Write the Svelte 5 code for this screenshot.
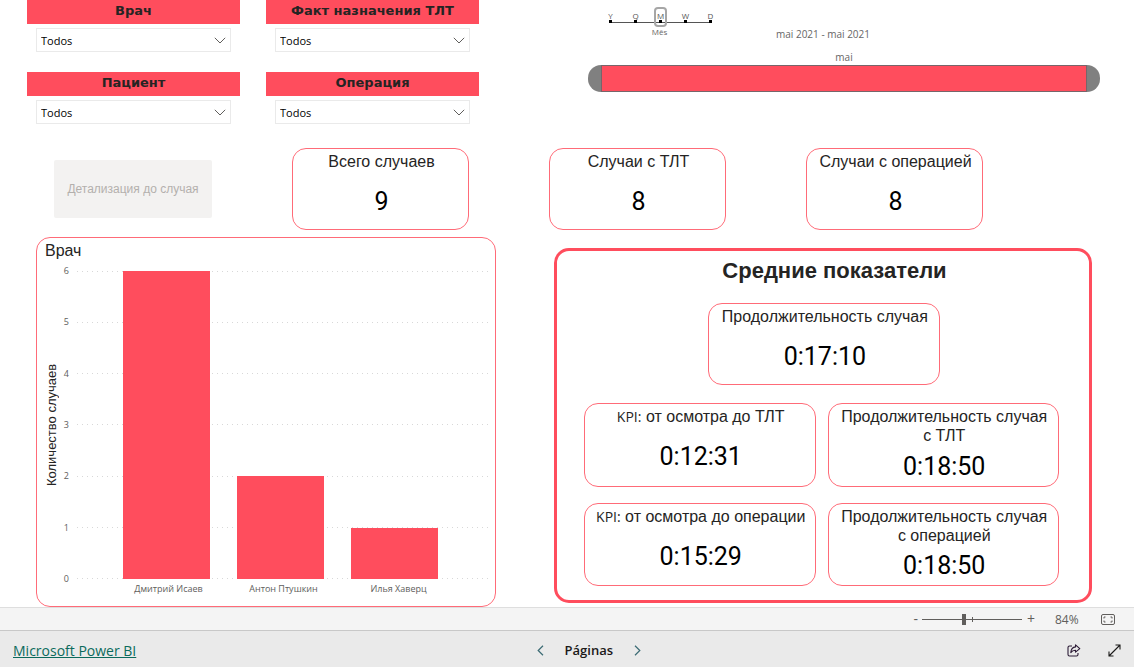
<script>
  const filters = ['Врач', 'Факт назначения ТЛТ', 'Пациент', 'Операция']
  const periods = ['Y', 'Q', 'M', 'W', 'D']

  const totals = [
    { title: 'Всего случаев', value: '9' },
    { title: 'Случаи с ТЛТ', value: '8' },
    { title: 'Случаи с операцией', value: '8' },
  ]

  const averages = [
    { prefix: 'KPI:', title: 'от осмотра до ТЛТ', value: '0:12:31' },
    { title: 'Продолжительность случая с ТЛТ', value: '0:18:50' },
    { prefix: 'KPI:', title: 'от осмотра до операции', value: '0:15:29' },
    { title: 'Продолжительность случая с операцией', value: '0:18:50' },
  ]

  const doctors = [
    { name: 'Дмитрий Исаев', cases: 6 },
    { name: 'Антон Птушкин', cases: 2 },
    { name: 'Илья Хаверц', cases: 1 },
  ]
  const MAX = 6
  const ticks = [6, 5, 4, 3, 2, 1, 0]

  let period = $state('M')
  let zoom = $state(84)
</script>

{#snippet card(item)}
  <article class="card">
    <h3>{#if item.prefix}<small>{item.prefix}</small>{' '}{/if}{item.title}</h3>
    <p>{item.value}</p>
  </article>
{/snippet}

<div class="report">
  <main>
    <section class="top">
      <div class="filters">
        {#each filters as name, i}
          <div class="filter">
            <label for="filter-{i}">{name}</label>
            <div class="select">
              <select id="filter-{i}"><option>Todos</option></select>
              <svg viewBox="0 0 12 7" width="12" height="7" fill="none" stroke="#605e5c">
                <path d="M0.8 0.8 L6 6 L11.2 0.8"/>
              </svg>
            </div>
          </div>
        {/each}
      </div>

      <div class="timeline">
        <div class="periods">
          {#each periods as p}
            <button class:active={period === p} onclick={() => (period = p)}><span>{p}</span></button>
          {/each}
        </div>
        <div class="period-name">Mês</div>
        <div class="dates">mai 2021 - mai 2021</div>
        <div class="month">mai</div>
        <div class="range">
          <button class="handle start" aria-label="Início"></button>
          <div class="span"></div>
          <button class="handle end" aria-label="Fim"></button>
        </div>
      </div>
    </section>

    <section class="totals">
      <button class="drill" disabled>Детализация до случая</button>
      {#each totals as t}{@render card(t)}{/each}
    </section>

    <section class="bottom">
      <div class="chart">
        <h2>Врач</h2>
        <div class="chart-body">
          <div class="y-title">Количество случаев</div>
          <div class="y-axis">
            {#each ticks as t}<span>{t}</span>{/each}
          </div>
          <div class="plot">
            <div class="grid">
              {#each ticks as t (t)}<i></i>{/each}
            </div>
            <div class="bars">
              {#each doctors as d}
                <div class="bar" style="height: {(d.cases / MAX) * 100}%"></div>
              {/each}
            </div>
          </div>
          <div class="x-axis">
            {#each doctors as d}<span>{d.name}</span>{/each}
          </div>
        </div>
      </div>

      <div class="panel">
        <h2>Средние показатели</h2>
        <div class="lead">
          {@render card({ title: 'Продолжительность случая', value: '0:17:10' })}
        </div>
        <div class="kpis">
          {#each averages as a}{@render card(a)}{/each}
        </div>
      </div>
    </section>
  </main>

  <div class="zoombar">
    <button aria-label="Reduzir">-</button>
    <input type="range" min="42" max="142" bind:value={zoom} aria-label="Zoom"/>
    <button aria-label="Ampliar">+</button>
    <output>{zoom}%</output>
    <button class="fit" aria-label="Ajustar à página">
      <svg viewBox="0 0 14 11" width="14" height="11" fill="none" stroke="#605e5c">
        <rect x="0.5" y="0.5" width="13" height="10" rx="1.5"/>
        <path d="M3 4.5V3h1.5 M9.5 3H11v1.5 M3 6.5V8h1.5 M9.5 8H11V6.5"/>
      </svg>
    </button>
  </div>

  <footer>
    <div class="brand"><a href="https://powerbi.microsoft.com">Microsoft Power BI</a></div>
    <nav>
      <button aria-label="Página anterior">
        <svg viewBox="0 0 7 11" width="7" height="11" fill="none" stroke="#3b6b74" stroke-width="1.2">
          <path d="M6 0.8 L1.2 5.5 L6 10.2"/>
        </svg>
      </button>
      <span>Páginas</span>
      <button aria-label="Próxima página">
        <svg viewBox="0 0 7 11" width="7" height="11" fill="none" stroke="#3b6b74" stroke-width="1.2">
          <path d="M1 0.8 L5.8 5.5 L1 10.2"/>
        </svg>
      </button>
    </nav>
    <div class="actions">
      <button aria-label="Compartilhar">
        <svg viewBox="0 0 14 13" width="14" height="13" fill="none" stroke="#2b1a35" stroke-width="1.1">
          <path d="M5 2H2.5Q1 2 1 3.5V10.5Q1 12 2.5 12H9.5Q11 12 11 10.5V9"/>
          <path d="M8.5 0.8 L12.8 4.6 L8.5 8.2 V6.2 Q5.5 6.1 3.8 8.6 Q4.2 3.3 8.5 2.9Z" stroke-linejoin="round"/>
        </svg>
      </button>
      <button aria-label="Tela cheia">
        <svg viewBox="0 0 13 13" width="13" height="13" fill="none" stroke="#1b1a19" stroke-width="1.1">
          <path d="M1 12 L12 1 M7.5 1H12V5.5 M1 7.5V12H5.5"/>
        </svg>
      </button>
    </div>
  </footer>
</div>

<style>
  :global(body) { margin: 0; }

  .report {
    --red: #ff4d5d;
    --ui: "Open Sans", "Noto Sans", sans-serif;
    min-height: 100vh;
    display: flex;
    flex-direction: column;
    background: #fff;
    color: #252423;
    font-family: "Liberation Sans", Arial, sans-serif;
  }

  .report * { box-sizing: border-box; }

  main {
    flex: 1;
    display: flex;
    flex-direction: column;
  }

  button {
    border: 0;
    padding: 0;
    background: none;
    font-family: var(--ui);
    color: inherit;
  }

  h2, h3, p { margin: 0; }
  svg { display: block; }

  .top {
    display: grid;
    grid-template-columns: 452fr 512fr;
    gap: 109px;
    padding: 0 34px 0 27px;
  }

  .filters {
    display: grid;
    grid-template-columns: 1fr 1fr;
    gap: 20px 26px;
    align-content: start;
  }

  .filter label {
    display: block;
    height: 24px;
    background: var(--red);
    font: bold 13px/22px "DejaVu Sans", sans-serif;
    text-align: center;
  }

  .select {
    display: grid;
    align-items: center;
    margin: 4px 9px 0;
  }

  .select > * { grid-area: 1 / 1; }

  .select select {
    appearance: none;
    height: 24px;
    padding: 0 4px;
    border: 1px solid #eaeaea;
    border-radius: 0;
    background: #fff;
    color: #000;
    font: 11px var(--ui);
  }

  .select svg {
    justify-self: end;
    margin-right: 5px;
    pointer-events: none;
  }

  .timeline {
    font-family: var(--ui);
    color: #666;
    text-align: center;
  }

  .periods {
    position: relative;
    display: flex;
    width: 125px;
    margin: 7px 0 0 10px;
  }

  .periods::before {
    content: "";
    position: absolute;
    left: 12px;
    right: 12px;
    top: 15px;
    height: 1px;
    background: #555;
  }

  .periods button {
    width: 25px;
    height: 20px;
    font-size: 8px;
    line-height: 14px;
    color: #555;
  }

  .periods span {
    position: relative;
    display: block;
    width: 13px;
    height: 20px;
    margin: 0 auto;
    padding-top: 2px;
  }

  .periods span::after {
    content: "";
    position: absolute;
    left: 5px;
    top: 13px;
    width: 3px;
    height: 3px;
    background: #000;
  }

  .periods .active span {
    border-radius: 4px;
    box-shadow: inset 0 0 0 2px #a6a6a6;
  }

  .period-name {
    width: 125px;
    margin-left: 9px;
    font-size: 8px;
    line-height: 10px;
  }

  .dates {
    margin-top: -10px;
    padding-right: 42px;
    font-size: 10px;
    line-height: 14px;
  }

  .month {
    margin-top: 9px;
    padding-bottom: 1px;
    font-size: 10px;
    line-height: 14px;
  }

  .range {
    display: flex;
    height: 27px;
  }

  .handle {
    width: 13px;
    background: #808080;
  }

  .start { border-radius: 13px 0 0 13px; }
  .end { border-radius: 0 13px 13px 0; }

  .span {
    flex: 1;
    background: var(--red);
    border: 1px solid #77656a;
  }

  .totals {
    display: grid;
    grid-template-columns: 158fr 177fr 177fr 177fr;
    gap: 80px;
    margin-top: 24px;
    padding: 0 151px 0 54px;
    align-items: start;
  }

  .drill {
    height: 58px;
    margin-top: 12px;
    border-radius: 2px;
    background: #f3f2f1;
    color: #b3b0ad;
    font: 12px "Liberation Sans", Arial, sans-serif;
  }

  .card {
    min-height: 82px;
    display: flex;
    flex-direction: column;
    padding: 3px 8px 0 10px;
    border: 1px solid #ff6b78;
    border-radius: 14px;
    text-align: center;
  }

  .card h3 {
    font-size: 16px;
    font-weight: 400;
    line-height: 19px;
  }

  .card small {
    font: 14px var(--ui);
    line-height: 16px;
  }

  .card p {
    flex: 1;
    display: flex;
    align-items: center;
    justify-content: center;
    padding-top: 3px;
    color: #000;
    font: 25px/28px Roboto, sans-serif;
  }

  .bottom {
    flex: 1;
    display: grid;
    grid-template-columns: 460fr 538fr;
    gap: 58px;
    margin-top: 7px;
    padding: 0 42px 0 36px;
  }

  .chart {
    display: flex;
    flex-direction: column;
    border: 1px solid #ff6b78;
    border-radius: 14px;
    padding: 3px 5px 10px 8px;
  }

  .chart h2 {
    font-size: 16px;
    font-weight: 400;
    line-height: 20px;
  }

  .chart-body {
    flex: 1;
    display: grid;
    grid-template: 1fr 17px / 14px 10px 1fr;
    padding-top: 10px;
  }

  .y-title {
    writing-mode: vertical-rl;
    transform: rotate(180deg);
    text-align: center;
    font-size: 13px;
    line-height: 14px;
  }

  .y-axis {
    display: flex;
    flex-direction: column;
    justify-content: space-between;
    margin: -6px 0;
    color: #605e5c;
    font: 9px/12px var(--ui);
    text-align: right;
  }

  .plot {
    display: grid;
    margin-left: 8px;
  }

  .plot > * { grid-area: 1 / 1; }

  .grid {
    display: flex;
    flex-direction: column;
    justify-content: space-between;
  }

  .grid i {
    height: 1px;
    background: repeating-linear-gradient(90deg, #d8d8d8 0 1px, transparent 1px 5px);
  }

  .bars, .x-axis {
    display: grid;
    grid-template-columns: repeat(3, 1fr);
    padding: 0 38px 0 32px;
  }

  .bars { align-items: end; }

  .bar {
    width: 76%;
    margin: 0 auto;
    background: var(--red);
  }

  .x-axis {
    grid-column: 3;
    margin-left: 8px;
    padding: 0 34px;
    color: #605e5c;
    font: 9px/20px var(--ui);
    text-align: center;
    white-space: nowrap;
  }

  .panel {
    display: flex;
    flex-direction: column;
    margin: 11px 0 4px;
    padding: 6px 30px 14px 27px;
    border: 3px solid var(--red);
    border-radius: 15px;
  }

  .panel h2 {
    padding-left: 26px;
    font-size: 22px;
    line-height: 28px;
    text-align: center;
  }

  .lead { padding: 18px 25% 18px 26%; }

  .kpis {
    flex: 1;
    display: grid;
    grid-template-columns: 1fr 1fr;
    gap: 16px 12px;
  }

  .zoombar {
    display: flex;
    align-items: center;
    justify-content: flex-end;
    height: 23px;
    padding-right: 19px;
    border-top: 1px solid #dedede;
    background: #f4f4f4;
    color: #605e5c;
    font: 12px var(--ui);
  }

  .zoombar button {
    font-size: 14px;
    line-height: 16px;
  }

  .zoombar output {
    width: 24px;
    margin: 0 22px 0 20px;
  }

  .zoombar input {
    appearance: none;
    width: 100px;
    height: 12px;
    margin: 0 5px 0 4px;
    background:
      linear-gradient(#605e5c, #605e5c) 50px 50% / 1px 5px no-repeat,
      linear-gradient(#605e5c, #605e5c) 0 50% / 100% 1px no-repeat;
  }

  .zoombar input::-webkit-slider-thumb {
    appearance: none;
    width: 4px;
    height: 11px;
    background: #605e5c;
  }

  footer {
    display: grid;
    grid-template-columns: 12fr auto 11fr;
    align-items: center;
    height: 37px;
    padding: 2px 13px 0;
    border-top: 1px solid #c8c8c8;
    background: #eaeaea;
    font: 13px var(--ui);
  }

  footer a {
    color: #0b6a5c;
    font-size: 14px;
  }

  nav {
    display: flex;
    align-items: center;
    gap: 21px;
    color: #1b1a19;
    font-weight: 600;
  }

  .actions {
    display: flex;
    justify-content: flex-end;
    gap: 27px;
  }
</style>
